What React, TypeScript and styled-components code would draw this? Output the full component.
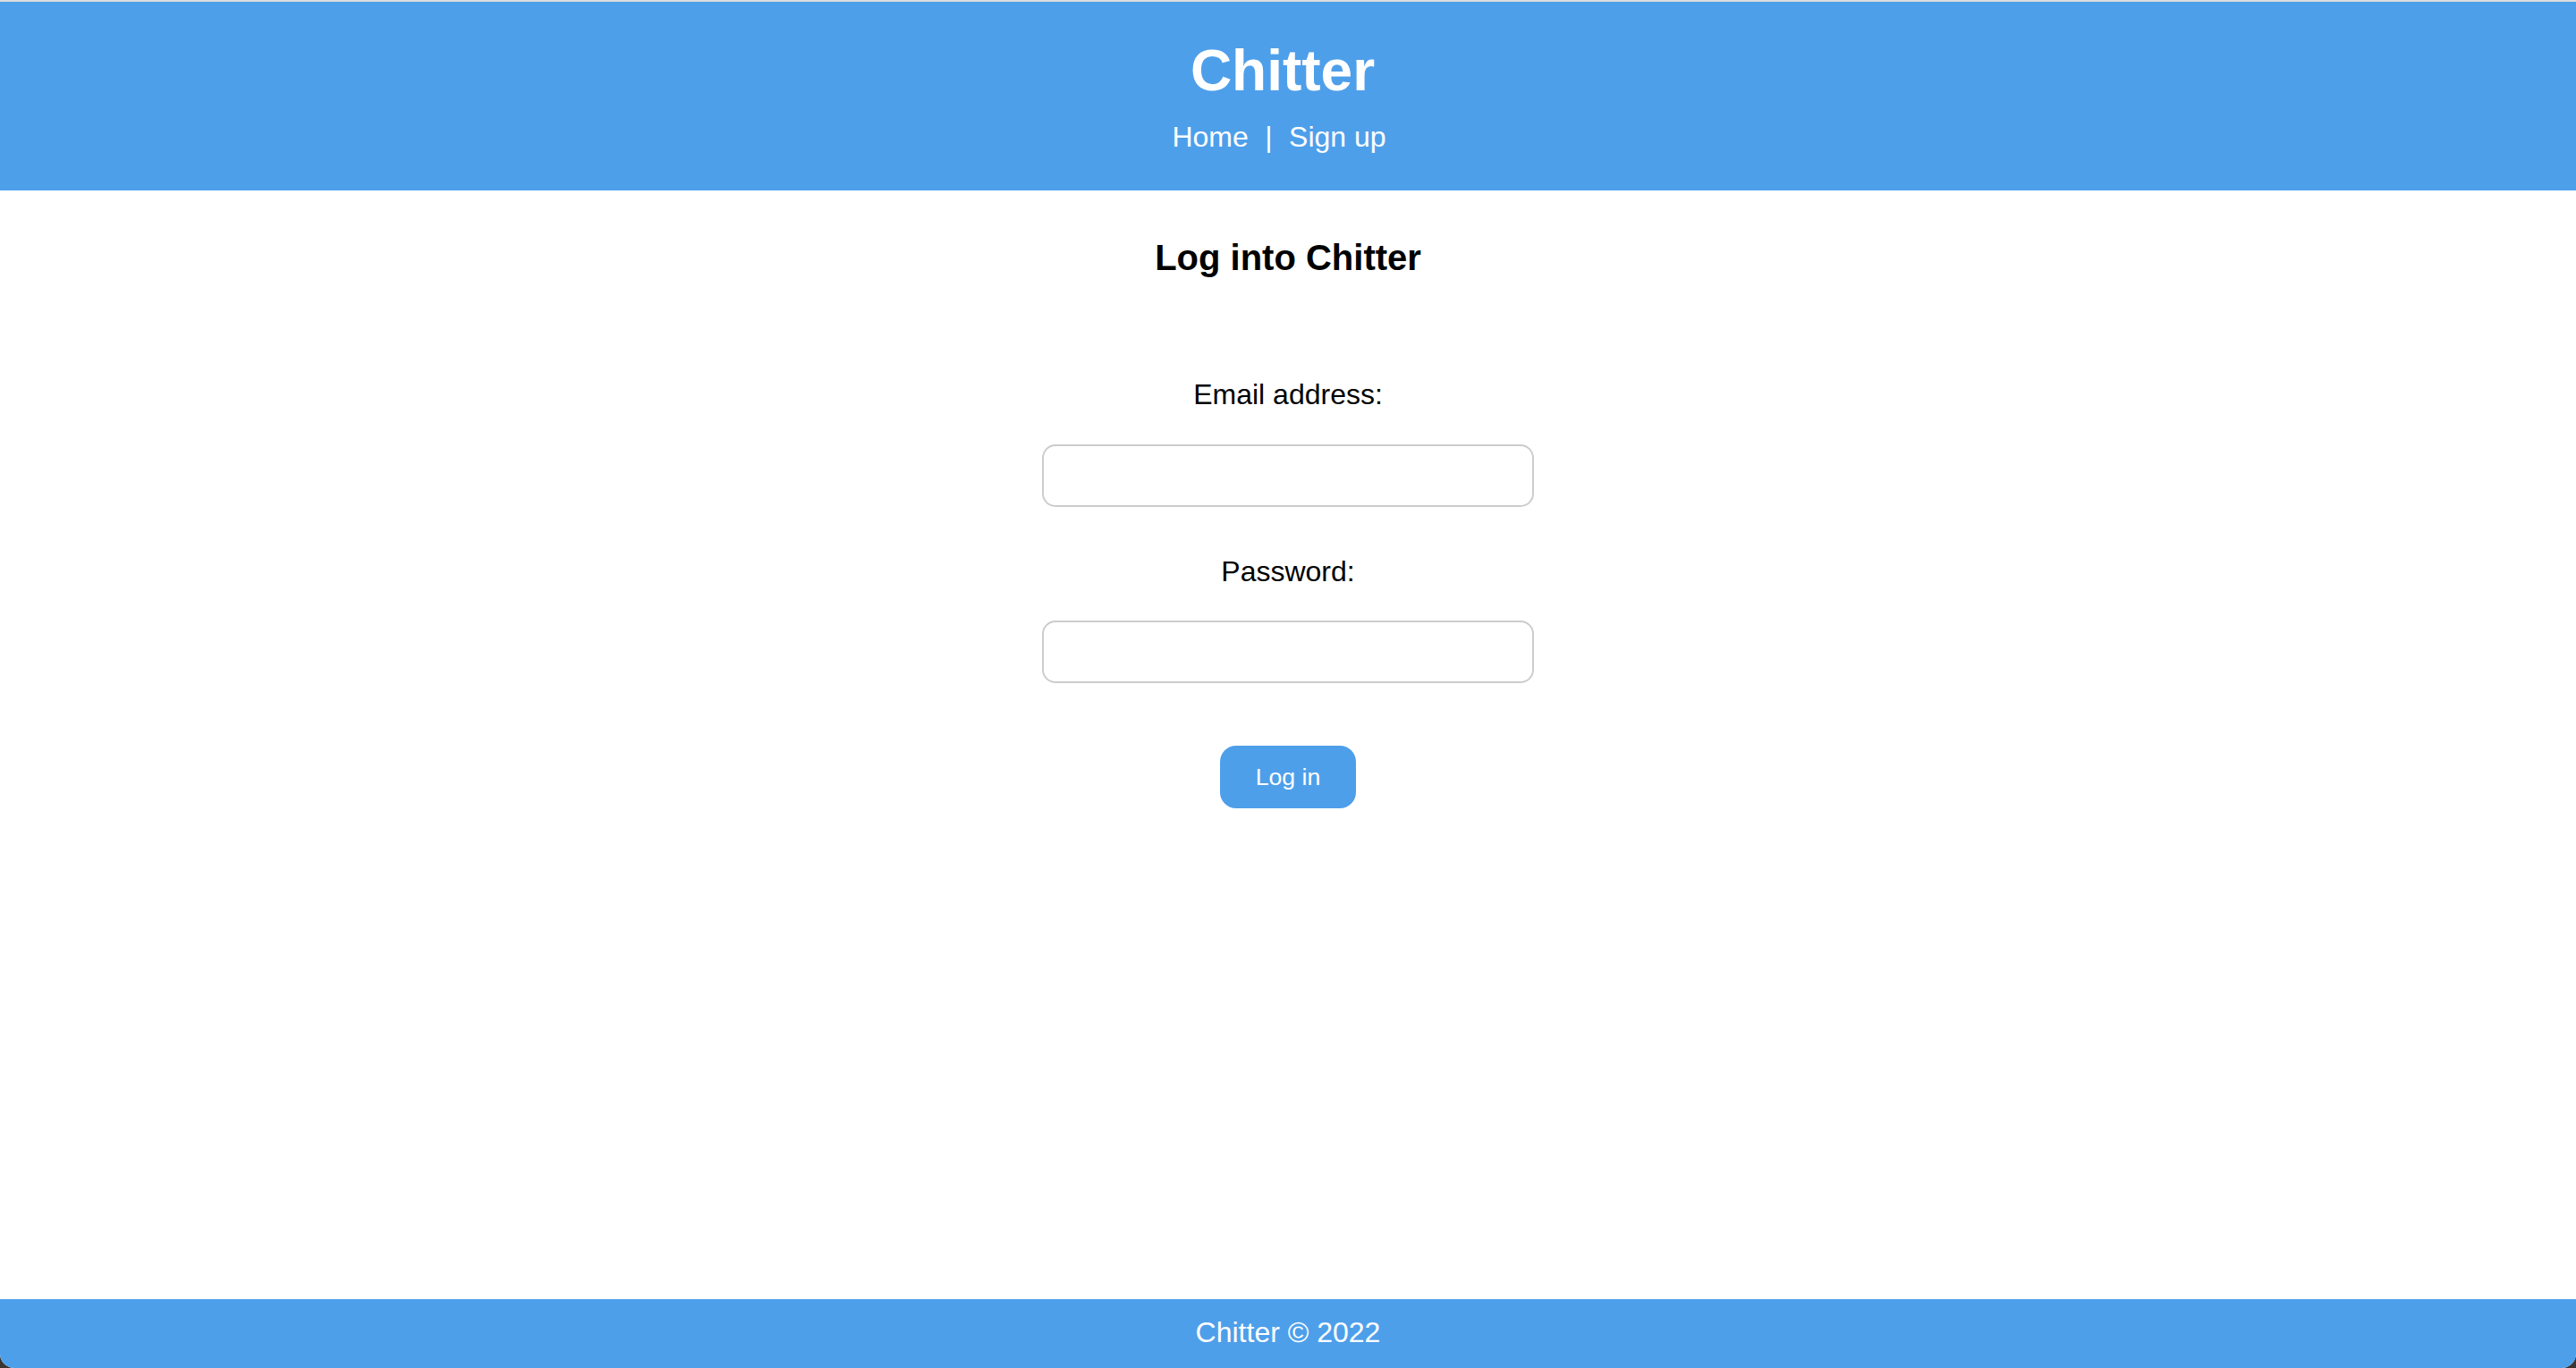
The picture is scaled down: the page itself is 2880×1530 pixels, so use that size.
import React from "react";
import styled, { createGlobalStyle } from "styled-components";

const BLUE = "#4e9fea";

const GlobalStyle = createGlobalStyle`
  html, body {
    margin: 0;
    padding: 0;
    background: #3b3432;
  }
  body {
    font-family: "Liberation Sans", Arial, Helvetica, sans-serif;
  }
  * { box-sizing: border-box; }
`;

const Page = styled.div`
  display: flex;
  flex-direction: column;
  height: 1530px;
  background: #ffffff;
  border-top: 2px solid #dcdcdc;
  border-radius: 0 0 16px 16px;
  overflow: hidden;
`;

const Header = styled.header`
  background: ${BLUE};
  color: #ffffff;
  text-align: center;
  padding-top: 40px;
  height: 211px;
`;

const Title = styled.h1`
  margin: 0;
  padding-right: 12px;
  font-size: 64px;
  font-weight: 700;
  line-height: 74px;
`;

const Nav = styled.nav`
  display: flex;
  justify-content: center;
  align-items: center;
  gap: 18.5px;
  margin-top: 19px;
  padding-right: 20px;
  font-size: 32px;
  line-height: 37px;
`;

const NavLink = styled.a`
  color: #ffffff;
  text-decoration: none;
`;

const Separator = styled.span`
  color: #ffffff;
`;

const Main = styled.main`
  flex: 1;
  display: flex;
  flex-direction: column;
  align-items: center;
  padding-top: 52px;
`;

const Heading = styled.h2`
  margin: 0 0 112px;
  font-size: 40px;
  font-weight: 700;
  line-height: 46px;
  color: #000000;
`;

const Form = styled.form`
  display: flex;
  flex-direction: column;
  align-items: center;
`;

const Label = styled.label<{ $gap: number }>`
  font-size: 32px;
  line-height: 37px;
  color: #000000;
  margin-bottom: ${(p) => p.$gap}px;
`;

const Input = styled.input<{ $after: number }>`
  width: 550px;
  height: 70px;
  border: 2px solid #cccccc;
  border-radius: 15px;
  background: #ffffff;
  outline: none;
  font-size: 28px;
  padding: 0 16px;
  margin-bottom: ${(p) => p.$after}px;
`;

const Button = styled.button`
  width: 152px;
  height: 70px;
  border: none;
  border-radius: 18px;
  background: ${BLUE};
  color: #ffffff;
  font-family: "Liberation Sans", Arial, Helvetica, sans-serif;
  font-size: 26.67px;
  cursor: pointer;
`;

const Footer = styled.footer`
  background: ${BLUE};
  color: #ffffff;
  text-align: center;
  height: 77px;
  padding-top: 19px;
  font-size: 32px;
  line-height: 37px;
`;

export default function App() {
  return (
    <>
      <GlobalStyle />
      <Page>
        <Header>
          <Title>Chitter</Title>
          <Nav>
            <NavLink href="#">Home</NavLink>
            <Separator>|</Separator>
            <NavLink href="#">Sign up</NavLink>
          </Nav>
        </Header>
        <Main>
          <Heading>Log into Chitter</Heading>
          <Form onSubmit={(e) => e.preventDefault()}>
            <Label $gap={37} htmlFor="email">Email address:</Label>
            <Input $after={54} id="email" type="email" />
            <Label $gap={36} htmlFor="password">Password:</Label>
            <Input $after={70} id="password" type="password" />
            <Button type="submit">Log in</Button>
          </Form>
        </Main>
        <Footer>Chitter © 2022</Footer>
      </Page>
    </>
  );
}
